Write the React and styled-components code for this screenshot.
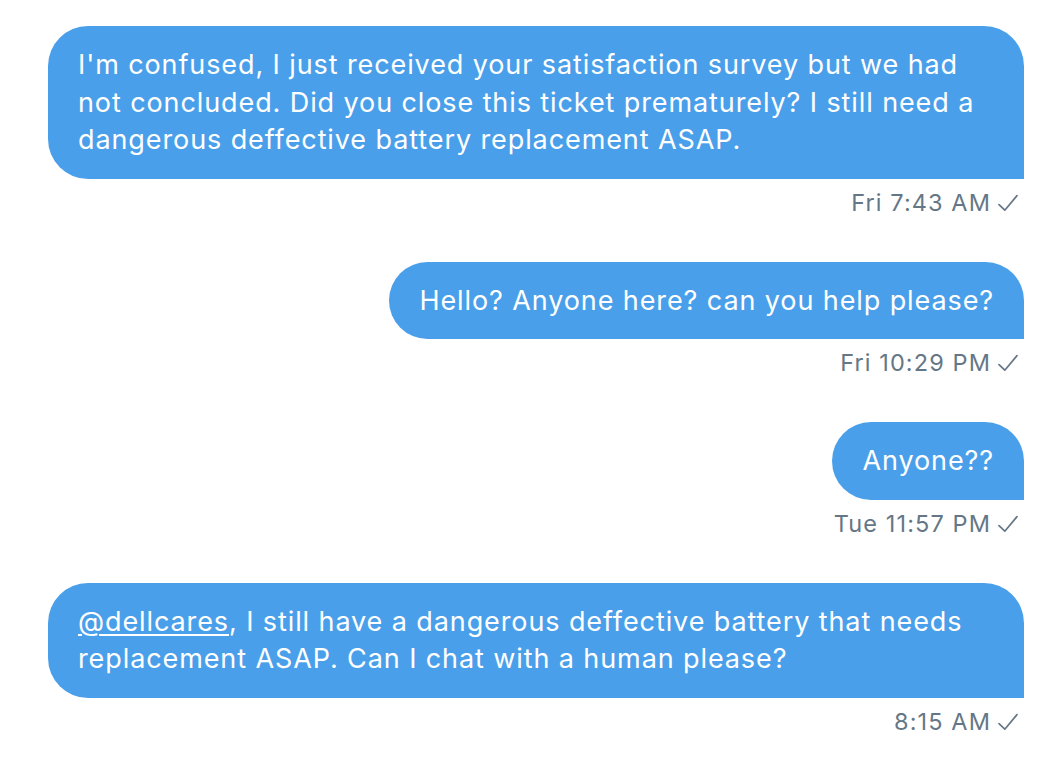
import React from "react";
import styled, { createGlobalStyle } from "styled-components";

const GlobalStyle = createGlobalStyle`
    html, body {
        margin: 0;
        padding: 0;
        background: #ffffff;
    }
    body {
        font-family: Inter, "Noto Sans", "Liberation Sans", sans-serif;
    }
`;

const Thread = styled.div`
    width: 1038px;
    box-sizing: border-box;
    padding: 26px 14px 0 48px;
    display: flex;
    flex-direction: column;
    align-items: flex-end;
`;

const Entry = styled.div`
    display: flex;
    flex-direction: column;
    align-items: flex-end;
    margin-bottom: 43px;
    max-width: 100%;
`;

const Bubble = styled.div`
    background: #4a9fea;
    color: #ffffff;
    font-size: 27px;
    line-height: 37.5px;
    letter-spacing: 0.9px;
    padding: 20px 30px 20px 30px;
    border-radius: 40px 40px 0 40px;
    box-sizing: border-box;
    white-space: nowrap;
    width: ${props => (props.wide ? "976px" : "auto")};
`;

const Mention = styled.span`
    text-decoration: underline;
    text-underline-offset: 3px;
    text-decoration-thickness: 1.5px;
`;

const Stamp = styled.div`
    display: flex;
    align-items: center;
    gap: 6px;
    margin-top: 8px;
    margin-right: 5px;
    color: #657786;
    font-size: 23.5px;
    line-height: 32px;
    letter-spacing: 1.1px;
`;

const Tick = () => (
    <svg width="22" height="22" viewBox="0 0 22 22" fill="none">
        <path d="M2 12.6 L7.8 18.2 L20 3.6" stroke="#657786" strokeWidth="1.7" strokeLinecap="round" strokeLinejoin="round" />
    </svg>
);

function Message({ wide, time, children }) {
    return (
        <Entry>
            <Bubble wide={wide}>{children}</Bubble>
            <Stamp>
                <span>{time}</span>
                <Tick />
            </Stamp>
        </Entry>
    );
}

export default function App() {
    return (
        <>
            <GlobalStyle />
            <Thread>
                <Message wide time="Fri 7:43 AM">
                    I'm confused, I just received your satisfaction survey but we had<br />
                    not concluded. Did you close this ticket prematurely? I still need a<br />
                    dangerous deffective battery replacement ASAP.
                </Message>
                <Message time="Fri 10:29 PM">
                    Hello? Anyone here? can you help please?
                </Message>
                <Message time="Tue 11:57 PM">
                    Anyone??
                </Message>
                <Message wide time="8:15 AM">
                    <Mention>@dellcares</Mention>, I still have a dangerous deffective battery that needs<br />
                    replacement ASAP. Can I chat with a human please?
                </Message>
            </Thread>
        </>
    );
}
